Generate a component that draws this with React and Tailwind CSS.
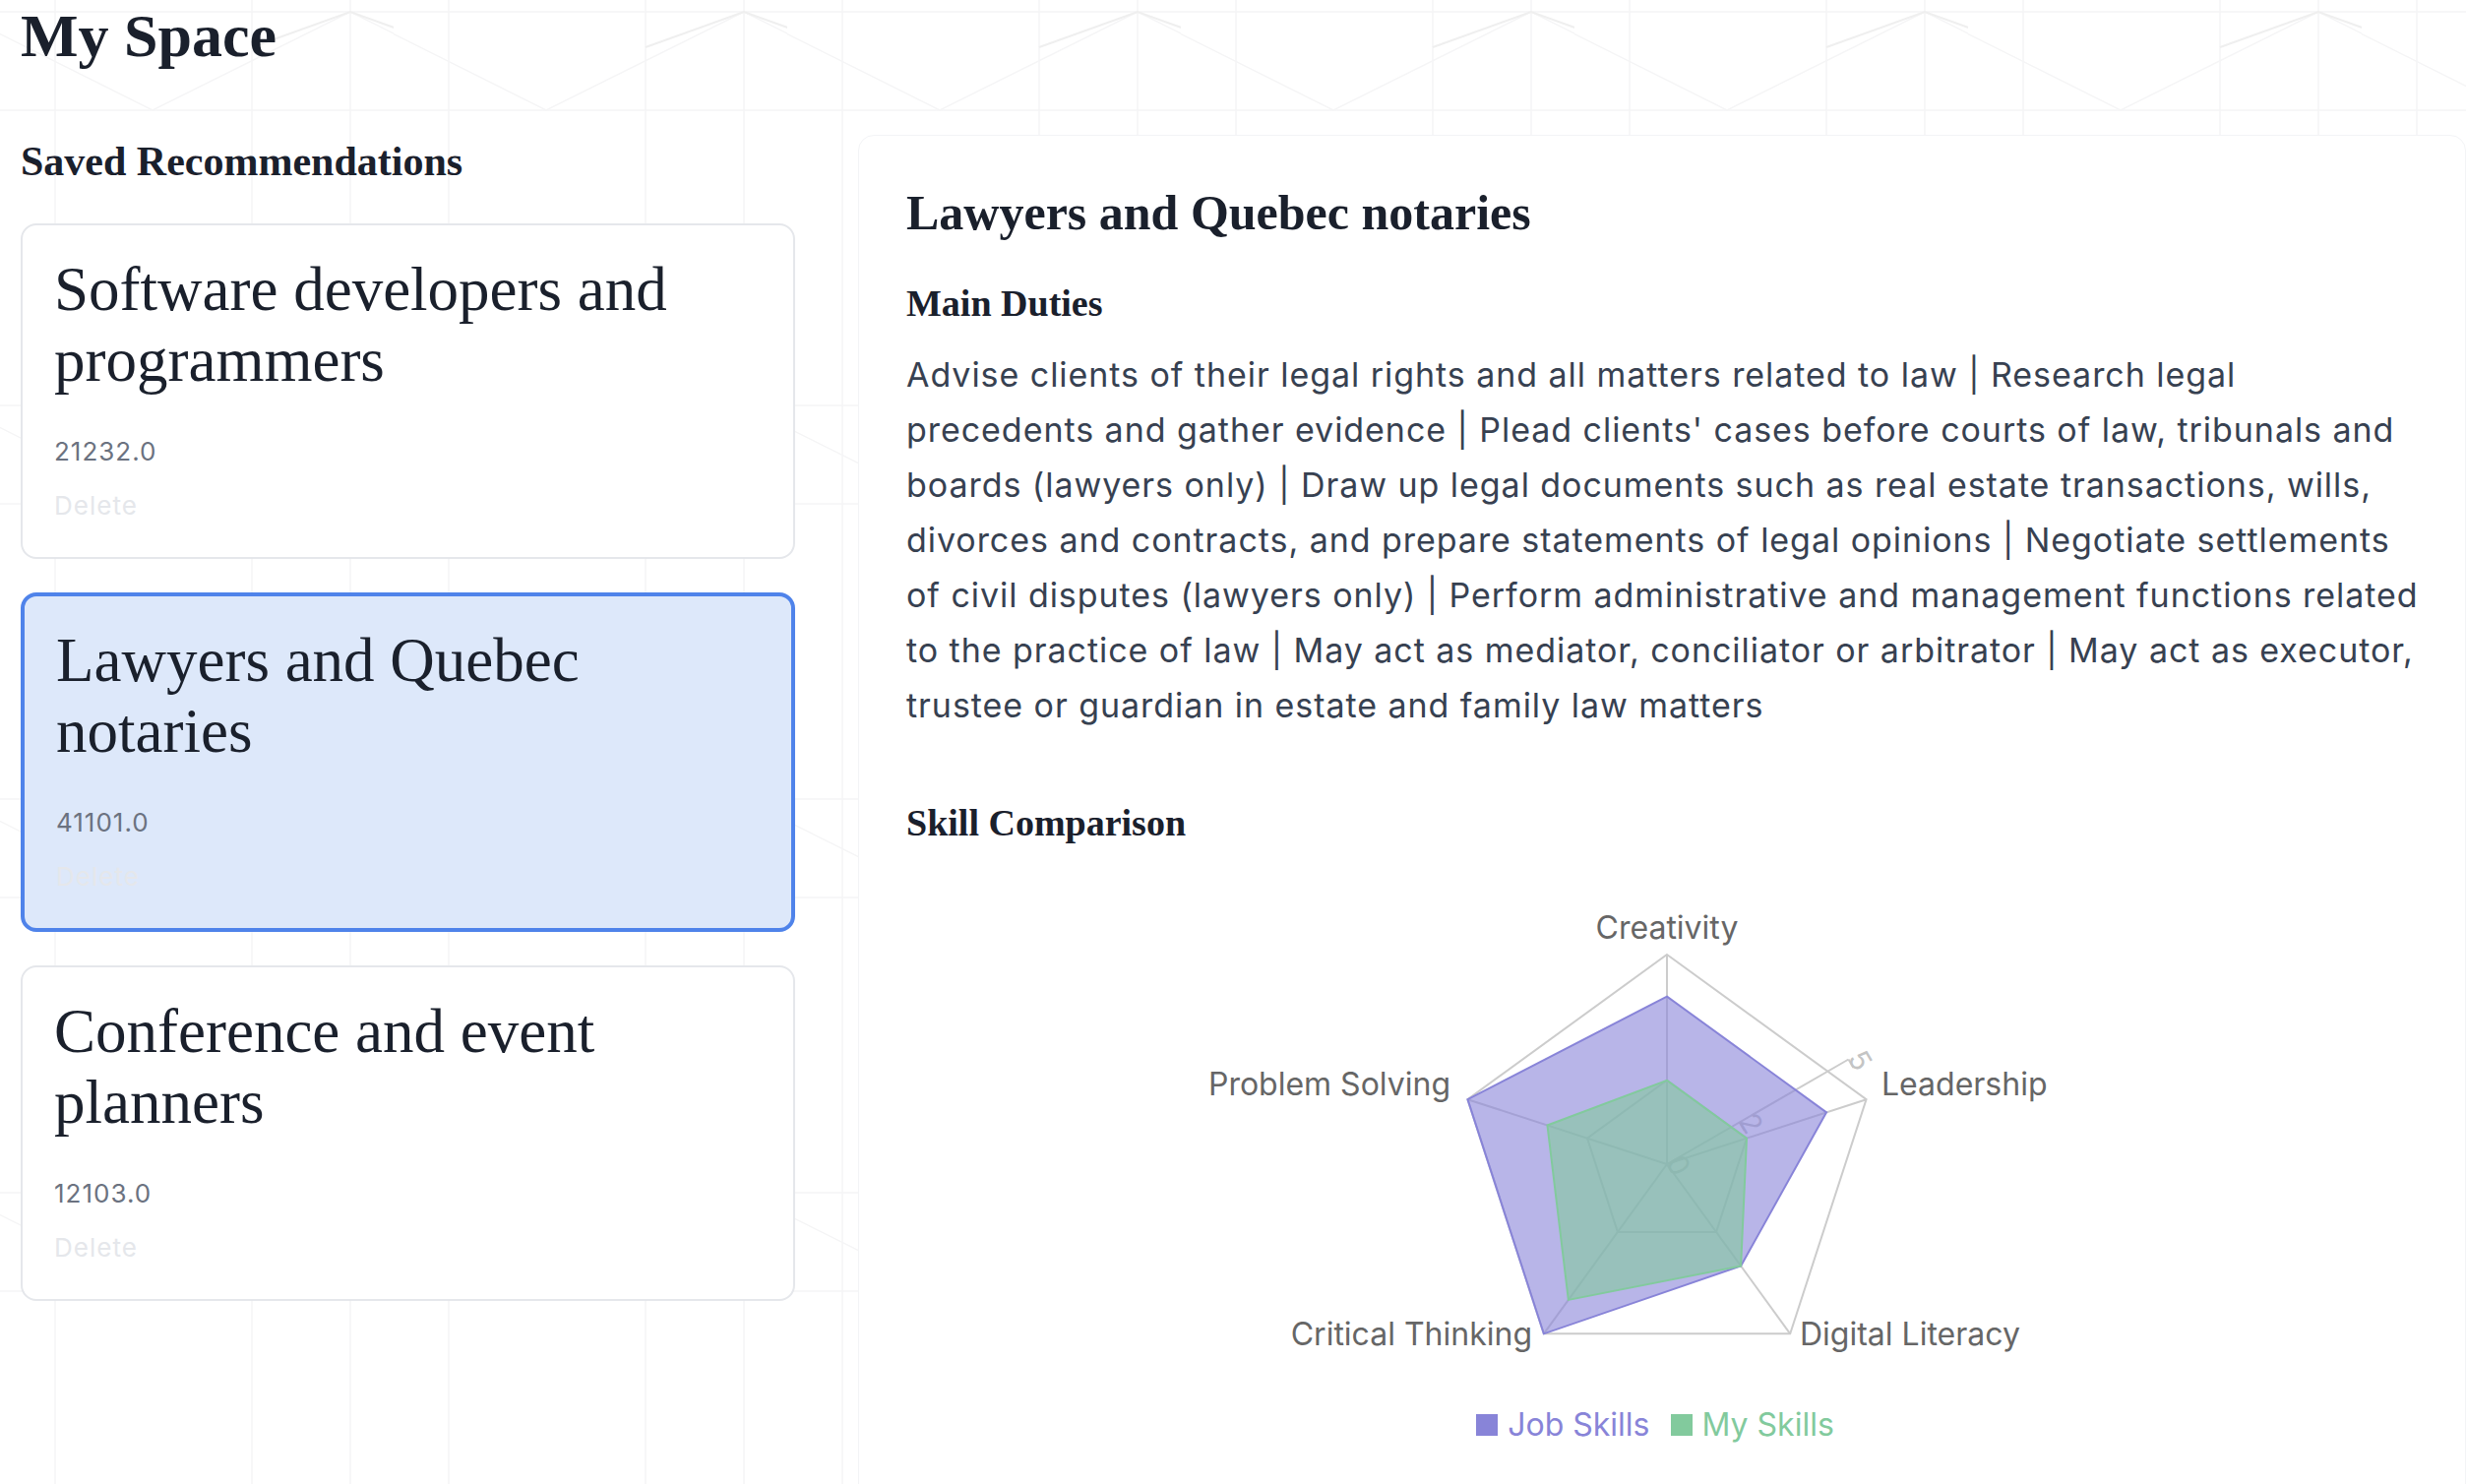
import React, { useState } from "react";

const saved = [
  { id: 1, title: "Software developers and programmers", code: "21232.0" },
  { id: 2, title: "Lawyers and Quebec notaries", code: "41101.0" },
  { id: 3, title: "Conference and event planners", code: "12103.0" },
];

// lines kept as in the original wrap
const dutyLines = [
  "Advise clients of their legal rights and all matters related to law | Research legal",
  "precedents and gather evidence | Plead clients' cases before courts of law, tribunals and",
  "boards (lawyers only) | Draw up legal documents such as real estate transactions, wills,",
  "divorces and contracts, and prepare statements of legal opinions | Negotiate settlements",
  "of civil disputes (lawyers only) | Perform administrative and management functions related",
  "to the practice of law | May act as mediator, conciliator or arbitrator | May act as executor,",
  "trustee or guardian in estate and family law matters",
];

const skills = [
  { name: "Creativity", job: 4, mine: 2, angle: 90, lx: 773, ly: 84, anchor: "middle" },
  { name: "Leadership", job: 4, mine: 2, angle: 18, lx: 991, ly: 243, anchor: "start" },
  { name: "Digital Literacy", job: 3, mine: 3, angle: -54, lx: 908, ly: 497, anchor: "start" },
  { name: "Critical Thinking", job: 5, mine: 4, angle: -126, lx: 636, ly: 497, anchor: "end" },
  { name: "Problem Solving", job: 5, mine: 3, angle: 162, lx: 553, ly: 243, anchor: "end" },
];

const CX = 773;
const CY = 313;
const R = 213;

const pt = (r, deg) => {
  const a = (deg * Math.PI) / 180;
  return [CX + r * Math.cos(a), CY - r * Math.sin(a)];
};

const poly = (fn) => skills.map((s) => pt(fn(s), s.angle).join(",")).join(" ");

function Background() {
  return (
    <svg className="absolute inset-0 w-full h-full pointer-events-none" aria-hidden="true">
      <defs>
        <pattern id="bgp" width="400" height="400" patternUnits="userSpaceOnUse">
          <g stroke="#f5f5f6" strokeWidth="1.5" fill="none">
            <line x1="56" y1="0" x2="56" y2="400" />
            <line x1="256" y1="0" x2="256" y2="400" />
            <line x1="356" y1="0" x2="356" y2="400" />
            <line x1="0" y1="12" x2="400" y2="12" />
            <line x1="0" y1="112" x2="400" y2="112" />
            <polyline points="-45,12 155,112 356,12 556,112" />
          </g>
          <g stroke="#efefef" strokeWidth="2" fill="none">
            <polyline points="256,48 356,12 456,48" />
          </g>
        </pattern>
      </defs>
      <rect width="100%" height="100%" fill="url(#bgp)" />
    </svg>
  );
}

function SkillRadar() {
  const [ex, ey] = pt(R, 30);
  return (
    <div className="flex flex-col">
      <svg width="1538" height="555" className="font-['Inter',sans-serif]">
        {/* grid */}
        {[2, 5].map((lvl) => (
          <polygon
            key={lvl}
            points={poly(() => (R * lvl) / 5)}
            fill="none"
            stroke="#cccccc"
            strokeWidth="2"
          />
        ))}
        {skills.map((s) => {
          const [x, y] = pt(R, s.angle);
          return <line key={s.name} x1={CX} y1={CY} x2={x} y2={y} stroke="#cccccc" strokeWidth="2" />;
        })}

        {/* radius axis */}
        <line x1={CX} y1={CY} x2={ex} y2={ey} stroke="#cccccc" strokeWidth="2" />
        {[0, 2, 5].map((v) => {
          const [x, y] = pt((R * v) / 5, 30);
          const tx = x + 12;
          const ty = y + 1;
          return (
            <g key={v}>
              <line x1={x} y1={y} x2={x + 5} y2={y + 8.6} stroke="#cccccc" strokeWidth="2" />
              <text
                x={tx}
                y={ty}
                fontSize="29"
                fill="#c4c4c4"
                textAnchor="middle"
                dominantBaseline="central"
                transform={`rotate(60 ${tx} ${ty})`}
              >
                {v}
              </text>
            </g>
          );
        })}

        <polygon
          points={poly((s) => (R * s.job) / 5)}
          fill="#8884d8"
          fillOpacity="0.6"
          stroke="#8884d8"
          strokeWidth="2"
        />
        <polygon
          points={poly((s) => (R * s.mine) / 5)}
          fill="#82ca9d"
          fillOpacity="0.6"
          stroke="#82ca9d"
          strokeWidth="2"
        />

        {skills.map((s) => (
          <text key={s.name} x={s.lx} y={s.ly} textAnchor={s.anchor} fill="#666666" fontSize="32">
            {s.name}
          </text>
        ))}
      </svg>
      <div className="flex justify-center items-center gap-[21px] pr-[14px] mt-[3px] text-[32px] leading-[40px] font-['Inter',sans-serif]">
        <div className="flex items-center gap-[10px] text-[#8884d8]">
          <span className="w-[22px] h-[22px] bg-[#8884d8]" />
          Job Skills
        </div>
        <div className="flex items-center gap-[10px] text-[#82ca9d]">
          <span className="w-[22px] h-[22px] bg-[#82ca9d]" />
          My Skills
        </div>
      </div>
    </div>
  );
}

function App() {
  const [selected, setSelected] = useState(2);
  const job = saved.find((s) => s.id === selected);

  return (
    <div className="relative h-screen bg-white overflow-hidden">
      <Background />
      <div className="relative pl-[21px]">
        <h1 className="pt-[1px] font-['Liberation_Serif',serif] font-bold text-[62px] leading-[70px] text-[#1a202c]">
          My Space
        </h1>

        <div className="flex mt-[66px] gap-[64px]">
          <div className="w-[787px] shrink-0">
            <h2 className="pt-[3px] font-['Liberation_Serif',serif] font-bold text-[42px] leading-[48px] text-[#1a202c]">
              Saved Recommendations
            </h2>
            <div className="flex flex-col gap-[34px] mt-[39px]">
              {saved.map((item) => (
                <div
                  key={item.id}
                  onClick={() => setSelected(item.id)}
                  className={
                    item.id === selected
                      ? "rounded-[16px] border-4 border-[#4f83ea] bg-[#dde8fa] px-[32px] pt-[29px] pb-[36px]"
                      : "rounded-[16px] border-2 border-[#e5e7eb] bg-white px-[32px] pt-[29px] pb-[36px]"
                  }
                >
                  <h3 className="font-['Liberation_Serif',serif] text-[63px] leading-[72px] text-[#1a202c] pr-[40px]">
                    {item.title}
                  </h3>
                  <p className="mt-[41px] font-['Inter',sans-serif] text-[26px] tracking-[1px] leading-[32px] text-[#6b7280]">
                    {item.code}
                  </p>
                  <button className="block mt-[23px] font-['Inter',sans-serif] text-[26px] tracking-[1px] leading-[32px] text-[#e5e7eb]">
                    Delete
                  </button>
                </div>
              ))}
            </div>
          </div>

          <div className="flex-1 min-w-0 rounded-t-[16px] border border-[#f3f4f6] bg-white p-[48px] pb-[120px]">
            <h2 className="font-['Liberation_Serif',serif] font-bold text-[50px] leading-[60px] text-[#1a202c]">
              {job.title}
            </h2>
            <h3 className="mt-[39px] font-['Liberation_Serif',serif] font-bold text-[38px] leading-[46px] text-[#1a202c]">
              Main Duties
            </h3>
            <p className="mt-[22px] font-['Inter',sans-serif] text-[34px] tracking-[0.95px] leading-[56px] text-[#374151]">
              {dutyLines.map((line) => (
                <span key={line} className="block whitespace-nowrap">
                  {line}
                </span>
              ))}
            </p>
            <h3 className="mt-[68px] font-['Liberation_Serif',serif] font-bold text-[38px] leading-[46px] text-[#1a202c]">
              Skill Comparison
            </h3>
            <div className="mt-[11px]">
              <SkillRadar />
            </div>
          </div>
        </div>
      </div>
    </div>
  );
}

export default App;
